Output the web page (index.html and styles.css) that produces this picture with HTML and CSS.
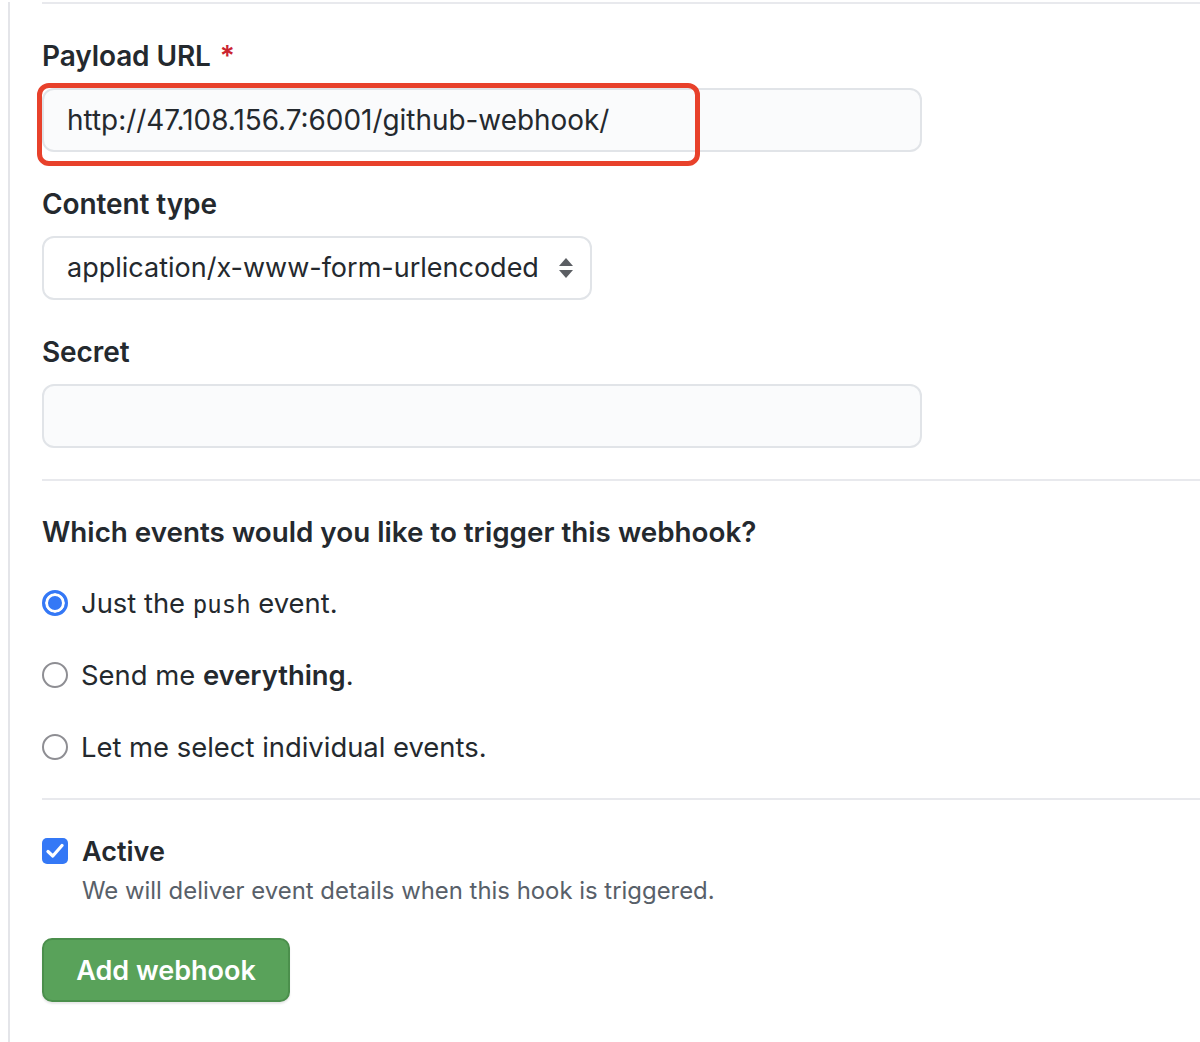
FILE: index.html
```html
<!DOCTYPE html>
<html>
<head>
<meta charset="utf-8">
<link rel="stylesheet" href="styles.css">
</head>
<body>
<div class="frame">
  <form class="form">
    <div class="group">
      <label class="label">Payload URL <span class="req">*</span></label>
      <div class="field-wrap">
        <div class="input wide url">http://47.108.156.7:6001/github-webhook/</div>
        <div class="highlight"></div>
      </div>
    </div>
    <div class="group">
      <label class="label">Content type</label>
      <div class="select">
        <span>application/x-www-form-urlencoded</span>
        <svg class="arrows" width="16" height="22" viewBox="0 0 16 22"><path d="M8 1 L15 9 L1 9 Z" fill="#5b5e63"/><path d="M1 13 L15 13 L8 21 Z" fill="#5b5e63"/></svg>
      </div>
    </div>
    <div class="group last">
      <label class="label">Secret</label>
      <div class="input wide"></div>
    </div>
    <hr class="divider">
    <h3 class="heading">Which events would you like to trigger this webhook?</h3>
    <div class="radios">
      <div class="radio-row"><span class="radio checked"></span><span>Just the <code class="code">push</code> event.</span></div>
      <div class="radio-row"><span class="radio"></span><span>Send me <strong>everything</strong>.</span></div>
      <div class="radio-row"><span class="radio"></span><span>Let me select individual events.</span></div>
    </div>
    <hr class="divider">
    <div class="check-row">
      <span class="checkbox"><svg width="18" height="16" viewBox="0 0 18 16"><path d="M2 8.5 L6.8 13 L16 2.5" fill="none" stroke="#fff" stroke-width="3.2" stroke-linecap="round" stroke-linejoin="round"/></svg></span>
      <span class="check-label">Active</span>
    </div>
    <p class="note">We will deliver event details when this hook is triggered.</p>
    <button type="button" class="btn">Add webhook</button>
  </form>
</div>
</body>
</html>
```
FILE: styles.css
```css
html, body {
  margin: 0;
  padding: 0;
  background: #ffffff;
}
body {
  font-family: Inter, "Noto Sans", "Liberation Sans", sans-serif;
  color: #24292e;
  overflow: hidden;
}
.frame {
  margin-left: 8px;
  border-left: 2px solid #e4e5e9;
  padding-left: 32px;
  min-height: 1042px;
  box-sizing: border-box;
}
.form {
  border-top: 2px solid #e8e9ed;
  margin-top: 2px;
  padding-top: 32px;
}
.group {
  margin-bottom: 32px;
}
.group.last {
  margin-bottom: 31px;
}
.label {
  display: block;
  font-size: 28px;
  font-weight: 600;
  line-height: 40px;
  margin-bottom: 12px;
  letter-spacing: -0.1px;
}
.req {
  color: #cb2431;
  margin-left: 2px;
}
.field-wrap {
  position: relative;
}
.input {
  box-sizing: border-box;
  height: 64px;
  border: 2px solid #e1e4e8;
  border-radius: 12px;
  background: #fafbfc;
  padding: 0 23px;
  font-size: 27px;
  line-height: 60px;
  color: #24292e;
}
.input.url {
  font-size: 27.9px;
}
.wide {
  width: 880px;
}
.highlight {
  position: absolute;
  left: -5px;
  top: -5px;
  width: 663px;
  height: 83px;
  box-sizing: border-box;
  border: 5px solid #e8412b;
  border-radius: 12px;
}
.select {
  box-sizing: border-box;
  width: 550px;
  height: 64px;
  border: 2px solid #e1e4e8;
  border-radius: 12px;
  background: #ffffff;
  padding: 0 16px 0 23px;
  font-size: 27px;
  line-height: 60px;
  display: flex;
  align-items: center;
  justify-content: space-between;
}
.arrows {
  display: block;
}
.divider {
  border: 0;
  border-top: 2px solid #e8e9ed;
  margin: 0;
}
.heading {
  margin: 31px 0 31px;
  font-size: 27.8px;
  font-weight: 600;
  line-height: 40px;
}
.radios {
  display: flex;
  flex-direction: column;
  gap: 32px;
  margin-bottom: 31px;
}
.radio-row {
  display: flex;
  align-items: center;
  gap: 13px;
  height: 40px;
  font-size: 27.4px;
}
.radio {
  box-sizing: border-box;
  width: 26px;
  height: 26px;
  border-radius: 50%;
  border: 2px solid #8e8e93;
  background: #fff;
  flex: none;
}
.radio.checked {
  border: 3px solid #3478f6;
  box-shadow: inset 0 0 0 3px #fff;
  background: #3478f6;
}
.code {
  font-family: "DejaVu Sans Mono", "Liberation Mono", monospace;
  font-size: 24px;
}
strong {
  font-weight: 600;
}
.check-row {
  display: flex;
  align-items: center;
  gap: 14px;
  height: 40px;
  margin-top: 31px;
}
.checkbox {
  box-sizing: border-box;
  width: 26px;
  height: 26px;
  border-radius: 5px;
  background: #3478f6;
  display: flex;
  align-items: center;
  justify-content: center;
  flex: none;
}
.check-label {
  font-size: 27px;
  font-weight: 600;
}
.note {
  margin: 0 0 27px 40px;
  font-size: 23.9px;
  line-height: 40px;
  color: #586069;
}
.btn {
  box-sizing: border-box;
  height: 64px;
  width: 248px;
  border: 2px solid #4b8f4c;
  border-radius: 10px;
  background: #59a25a;
  color: #ffffff;
  font-family: Inter, "Noto Sans", "Liberation Sans", sans-serif;
  font-size: 27px;
  font-weight: 600;
  padding: 0;
  box-shadow: 0 2px 2px rgba(27, 31, 35, 0.1);
}
```
